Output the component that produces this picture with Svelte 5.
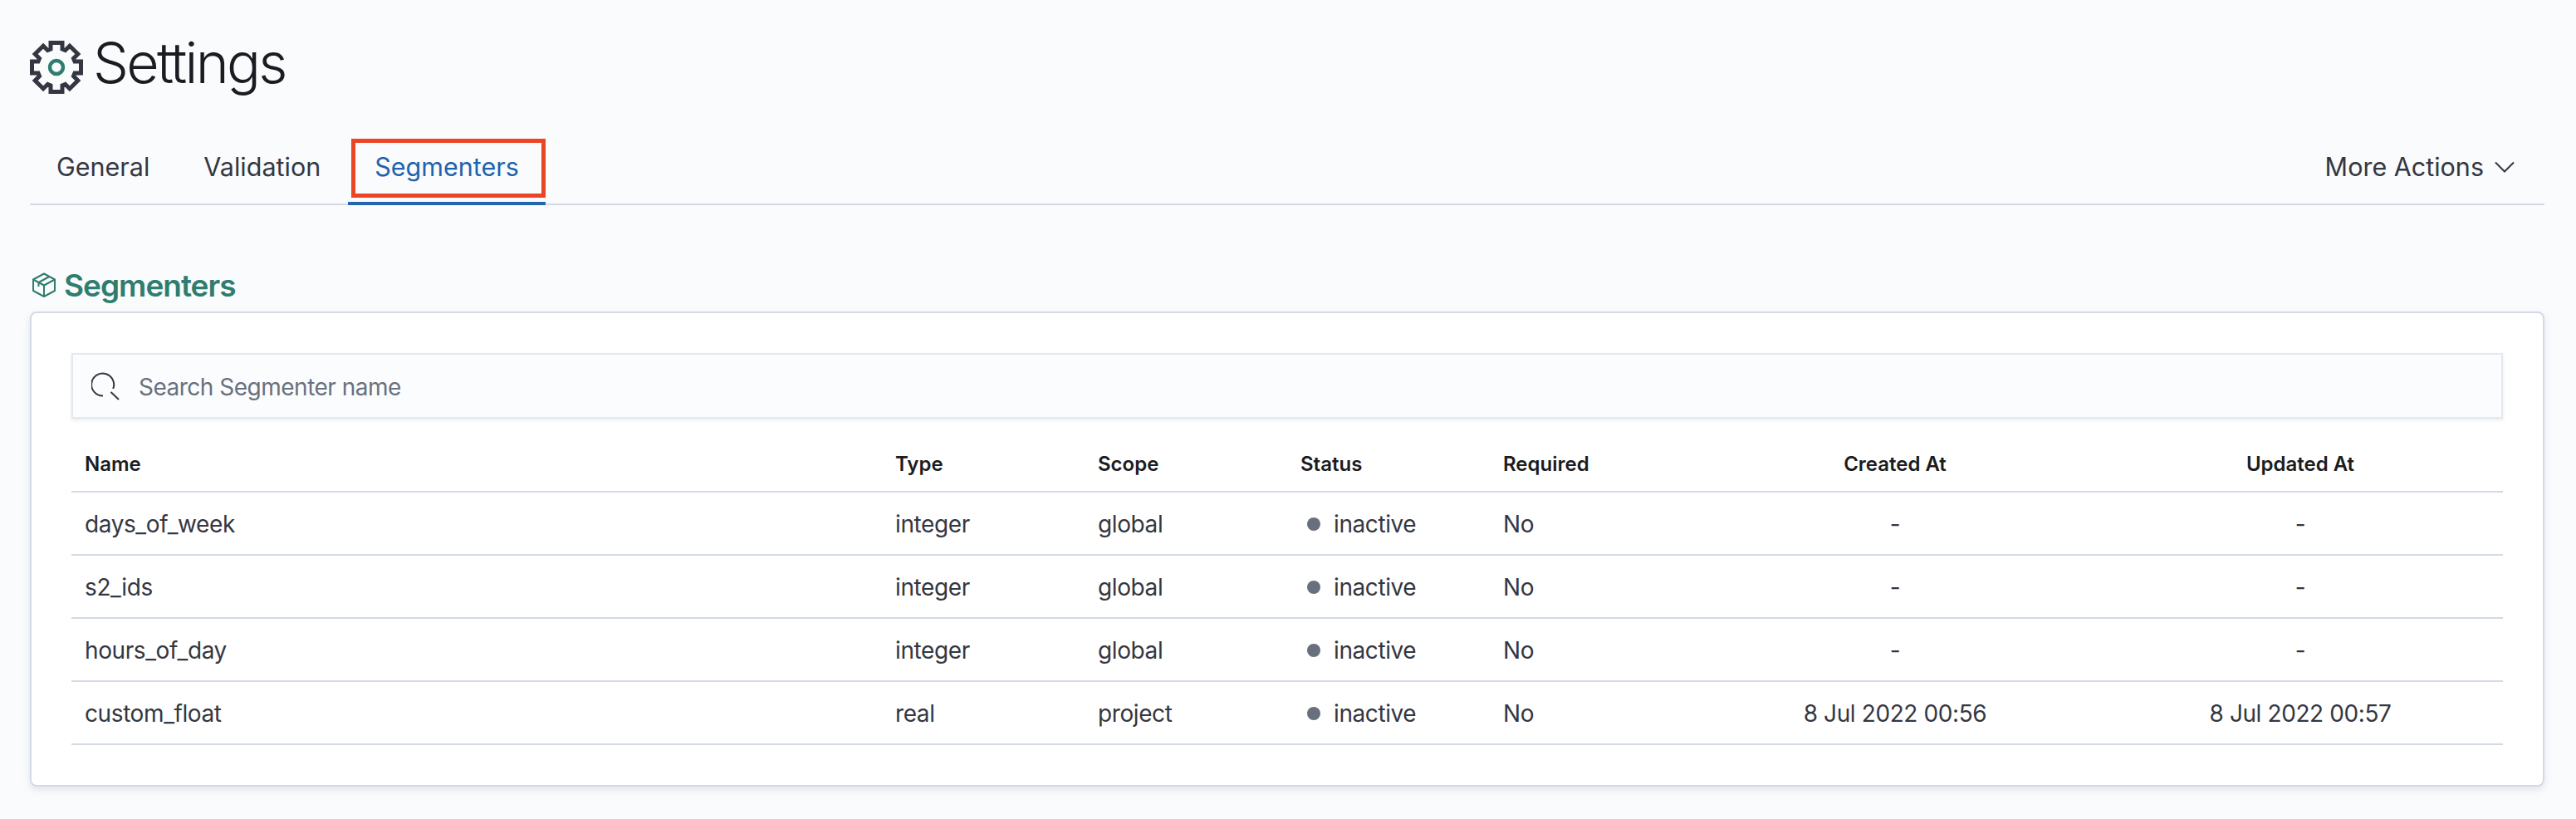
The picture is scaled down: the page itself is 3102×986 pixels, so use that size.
<script>
  const tabs = ['General', 'Validation', 'Segmenters'];
  const columns = [
    { label: 'Name', width: 976 },
    { label: 'Type', width: 244 },
    { label: 'Scope', width: 244 },
    { label: 'Status', width: 244 },
    { label: 'Required', width: 244 },
    { label: 'Created At', width: 488, center: true },
    { label: 'Updated At', width: 488, center: true }
  ];
  const rows = [
    { name: 'days_of_week', type: 'integer', scope: 'global', required: 'No', created: '-', updated: '-' },
    { name: 's2_ids', type: 'integer', scope: 'global', required: 'No', created: '-', updated: '-' },
    { name: 'hours_of_day', type: 'integer', scope: 'global', required: 'No', created: '-', updated: '-' },
    { name: 'custom_float', type: 'real', scope: 'project', required: 'No', created: '8 Jul 2022 00:56', updated: '8 Jul 2022 00:57' }
  ];

  // eight-toothed cog outline, centred on 32,32
  function gearPoints() {
    const local = [[22, -7], [29.5, -7], [29.5, 7], [22, 7]];
    const pts = [];
    for (let i = 0; i < 8; i++) {
      const a = (i * Math.PI) / 4;
      for (const [r, t] of local) {
        const x = 32 + r * Math.sin(a) + t * Math.cos(a);
        const y = 32 - r * Math.cos(a) + t * Math.sin(a);
        pts.push(x.toFixed(2) + ',' + y.toFixed(2));
      }
    }
    return pts.join(' ');
  }
</script>

<div class="page">
  <header class="title">
    <svg class="gear" width="64" height="64" viewBox="0 0 64 64" fill="none">
      <polygon points={gearPoints()} stroke="#343741" stroke-width="5" stroke-linejoin="miter" />
      <circle cx="32" cy="32" r="8" stroke="#2f7d6f" stroke-width="4.5" />
    </svg>
    <h1>Settings</h1>
  </header>

  <nav class="tabbar">
    <div class="tabs">
      {#each tabs as tab}
        <div class="tab" class:active={tab === 'Segmenters'}>
          {tab}
          {#if tab === 'Segmenters'}<span class="marker"></span>{/if}
        </div>
      {/each}
    </div>
    <div class="more">
      More Actions
      <svg width="24" height="14" viewBox="0 0 24 14" fill="none">
        <path d="M1 1.5 12 12.5 23 1.5" stroke="#343741" stroke-width="2" />
      </svg>
    </div>
  </nav>

  <section>
    <h2>
      <svg width="30" height="30" viewBox="0 0 30 30" fill="none" stroke="#2f7d6f" stroke-width="2" stroke-linejoin="round">
        <path d="M15 1.5 28 8.5V22L15 29 2 22V8.5Z" />
        <path d="M2 8.5 15 15.5 28 8.5M15 15.5V29M21.5 5 8.5 12V17" />
      </svg>
      Segmenters
    </h2>

    <div class="panel">
      <div class="search">
        <svg width="34" height="34" viewBox="0 0 34 34" fill="none" stroke="#343741" stroke-width="2">
          <path d="M14 28.5A13.5 13.5 0 1 1 26.2 20" />
          <path d="M23.5 24 33 33" />
        </svg>
        <span>Search Segmenter name</span>
      </div>

      <table>
        <colgroup>
          {#each columns as col}
            <col style="width: {col.width}px" />
          {/each}
        </colgroup>
        <thead>
          <tr>
            {#each columns as col}
              <th class:center={col.center}>{col.label}</th>
            {/each}
          </tr>
        </thead>
        <tbody>
          {#each rows as row}
            <tr>
              <td>{row.name}</td>
              <td>{row.type}</td>
              <td>{row.scope}</td>
              <td><span class="status"><i class="dot"></i>inactive</span></td>
              <td>{row.required}</td>
              <td class="center">{row.created}</td>
              <td class="center">{row.updated}</td>
            </tr>
          {/each}
        </tbody>
      </table>
    </div>
  </section>
</div>

<style>
  :global(body) {
    margin: 0;
    background: #fafbfd;
    font-family: Inter, "Noto Sans", sans-serif;
    color: #343741;
  }

  .page {
    padding: 49px 38px 40px 36px;
    height: 986px;
    box-sizing: border-box;
  }

  .title {
    display: flex;
    align-items: flex-start;
    gap: 12px;
    height: 64px;
  }

  .gear {
    flex: none;
  }

  h1 {
    margin: -6px 0 0;
    font-size: 68px;
    font-weight: 300;
    line-height: 64px;
    letter-spacing: -2.7px;
    color: #1a1c21;
  }

  .tabbar {
    display: flex;
    justify-content: space-between;
    align-items: stretch;
    margin-top: 54px;
    height: 78px;
    border-bottom: 2px solid #d3dae6;
  }

  .tabs {
    display: flex;
    gap: 1px;
  }

  .tab {
    position: relative;
    display: flex;
    align-items: center;
    padding: 0 32px 9px;
    font-size: 30.5px;
    margin-bottom: -2px;
    border-bottom: 4px solid transparent;
  }

  .tab.active {
    color: #1e63ad;
    border-bottom-color: #2266b0;
  }

  .marker {
    position: absolute;
    left: 4px;
    right: 0;
    top: 0;
    bottom: 5px;
    border: 5px solid #ec4525;
  }

  .more {
    display: flex;
    align-items: center;
    gap: 13px;
    padding: 0 36px 11px 0;
    font-size: 30.5px;
  }

  h2 {
    display: flex;
    align-items: center;
    gap: 9px;
    margin: 79px 0 0 2px;
    height: 34px;
    font-size: 37px;
    font-weight: 600;
    letter-spacing: -1px;
    color: #2f7d6f;
  }

  .panel {
    margin-top: 15px;
    padding: 48px 48px 48px 48px;
    background: #fff;
    border: 2px solid #d3dae6;
    border-radius: 8px;
    box-shadow: 0 4px 8px rgba(152, 162, 179, 0.25);
  }

  .search {
    display: flex;
    align-items: center;
    gap: 23px;
    height: 79px;
    box-sizing: border-box;
    padding: 0 0 0 22px;
    background: #fbfcfd;
    border: 2px solid #e4e8f0;
    box-shadow: 0 2px 4px rgba(152, 162, 179, 0.2);
    font-size: 28px;
    letter-spacing: -0.5px;
    color: #69707d;
  }

  .search span {
    padding-top: 2px;
  }

  table {
    width: 100%;
    table-layout: fixed;
    border-collapse: collapse;
  }

  th {
    box-sizing: border-box;
    height: 88px;
    padding: 22px 16px 0;
    text-align: left;
    font-size: 24px;
    font-weight: 600;
    color: #1a1c21;
    border-bottom: 2px solid #d3dae6;
  }

  td {
    box-sizing: border-box;
    height: 76px;
    padding: 1px 16px 0;
    font-size: 28px;
    letter-spacing: -0.4px;
    border-bottom: 2px solid #d3dae6;
  }

  th.center,
  td.center {
    text-align: center;
  }

  .status {
    display: flex;
    align-items: center;
    gap: 16px;
    padding-left: 8px;
  }

  .dot {
    width: 16px;
    height: 16px;
    border-radius: 50%;
    background: #69707d;
  }
</style>
